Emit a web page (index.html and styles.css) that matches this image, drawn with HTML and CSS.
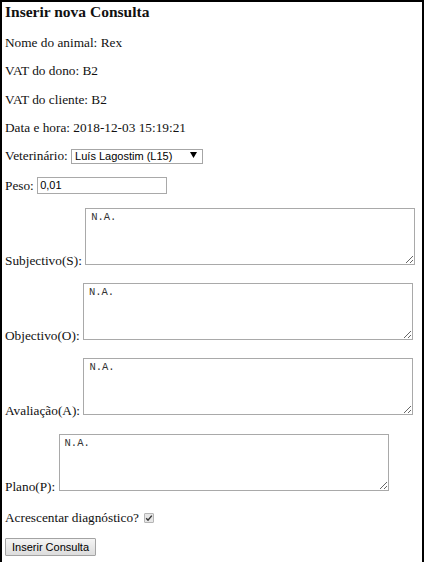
FILE: index.html
```html
<!DOCTYPE html>
<html>
<head>
<meta charset="utf-8">
<link rel="stylesheet" href="styles.css">
</head>
<body>
<div class="frame">
  <h3 class="title">Inserir nova Consulta</h3>
  <form class="form">
    <p class="row">Nome do animal: Rex</p>
    <p class="row">VAT do dono: B2</p>
    <p class="row">VAT do cliente: B2</p>
    <p class="row">Data e hora: 2018-12-03 15:19:21</p>
    <p class="row">Veterinário: <span class="select-wrap"><select class="select"><option>Luís Lagostim (L15)</option></select><svg class="arrow" width="7" height="6" viewBox="0 0 7 6"><path d="M0 0H7L3.5 6Z" fill="#000"/></svg></span></p>
    <p class="row">Peso: <input class="text" type="text" value="0,01"></p>
    <p class="row row-area row-first">Subjectivo(S): <textarea class="area">N.A.</textarea></p>
    <p class="row row-area">Objectivo(O): <textarea class="area">N.A.</textarea></p>
    <p class="row row-area">Avaliação(A): <textarea class="area">N.A.</textarea></p>
    <p class="row row-area">Plano(P): <textarea class="area">N.A.</textarea></p>
    <p class="row row-check">Acrescentar diagnóstico? <input class="check" type="checkbox" checked></p>
    <p class="row"><button class="btn" type="button">Inserir Consulta</button></p>
  </form>
</div>
</body>
</html>
```
FILE: styles.css
```css
html, body {
  margin: 0;
  padding: 0;
  background: #fff;
}
body {
  font-family: "Liberation Serif", "Times New Roman", serif;
  font-size: 13.3px;
  color: #111;
}
.frame {
  width: 417px;
  min-height: 560px;
  border: 2px solid #000;
  border-bottom: none;
  padding: 0 0 0 3px;
  box-sizing: content-box;
}
.title {
  font-size: 15.5px;
  font-weight: bold;
  margin: 1px 0 14px;
  line-height: 18px;
}
.row {
  margin: 13px 0;
  line-height: 15.3px;
}
.row-area {
  margin-top: 15px;
}
.row-first {
  margin-top: 14px;
}
.row-check {
  margin-top: 16px;
}
.select-wrap {
  position: relative;
  display: inline-block;
  vertical-align: baseline;
}
.select {
  appearance: none;
  -webkit-appearance: none;
  width: 132px;
  height: 15px;
  margin: 0;
  padding: 0 0 0 3px;
  border: 1px solid #a6a6a6;
  border-radius: 0;
  background: #fff;
  font-family: "Liberation Sans", Arial, sans-serif;
  font-size: 11px;
  color: #000;
  box-sizing: border-box;
  vertical-align: baseline;
}
.arrow {
  position: absolute;
  right: 6px;
  top: 4px;
  pointer-events: none;
}
.text {
  width: 130px;
  height: 17px;
  margin: 0;
  padding: 0 2px;
  border: 1px solid #a9a9a9;
  border-radius: 0;
  font-family: "Liberation Sans", Arial, sans-serif;
  font-size: 11px;
  color: #000;
  box-sizing: border-box;
}
.area {
  width: 330px;
  height: 57px;
  margin: 0;
  padding: 2px 5px;
  border: 1px solid #a9a9a9;
  border-radius: 0;
  font-family: "Liberation Mono", "Courier New", monospace;
  font-size: 10.5px;
  color: #333;
  box-sizing: border-box;
  resize: both;
  vertical-align: baseline;
}
.check {
  appearance: none;
  -webkit-appearance: none;
  width: 10px;
  height: 10px;
  margin: 0 0 0 2px;
  border: 1px solid #b5b5b5;
  border-radius: 1px;
  background: #e6e6e6 url("data:image/svg+xml;utf8,<svg xmlns='http://www.w3.org/2000/svg' width='8' height='8' viewBox='0 0 8 8'><path d='M1.2 4.3L3 6.2L6.8 1.6' fill='none' stroke='%23333' stroke-width='1.4'/></svg>") center/8px 8px no-repeat;
  vertical-align: -1px;
  box-sizing: border-box;
}
.btn {
  height: 18px;
  margin: 0;
  padding: 0 6px;
  border: 1px solid #a3a3a3;
  border-radius: 1px;
  background: linear-gradient(#f5f5f5, #dcdcdc);
  font-family: "Liberation Sans", Arial, sans-serif;
  font-size: 11px;
  color: #000;
}
```
